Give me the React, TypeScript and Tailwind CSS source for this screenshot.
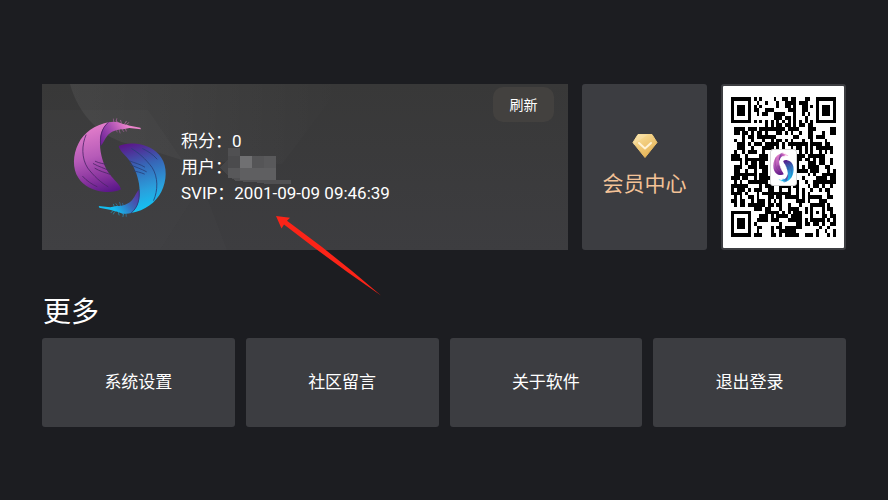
import React from "react";

const moreItems = ["系统设置", "社区留言", "关于软件", "退出登录"];

const SIZE = 37;

function inSquare(x: number, y: number, left: number, top: number, size: number) {
  return x >= left && x < left + size && y >= top && y < top + size;
}

function ring(x: number, y: number, cx: number, cy: number) {
  return Math.max(Math.abs(x - cx), Math.abs(y - cy));
}

// Builds the dark modules: three finders, timing lines, one alignment mark and data.
function buildModules() {
  let seed = 20010909;
  let path = "";
  const last = SIZE - 4;
  for (let y = 0; y < SIZE; y++) {
    for (let x = 0; x < SIZE; x++) {
      seed = (Math.imul(seed, 1103515245) + 12345) & 0x7fffffff;
      let dark = ((seed >> 16) & 255) < 134;
      if (x === 6 || y === 6) dark = (x + y) % 2 === 0;
      if (ring(x, y, 30, 30) <= 2) dark = ring(x, y, 30, 30) !== 1;
      if (
        inSquare(x, y, 0, 0, 8) ||
        inSquare(x, y, SIZE - 8, 0, 8) ||
        inSquare(x, y, 0, SIZE - 8, 8)
      ) {
        const d = ring(x, y, x < 8 ? 3 : last, y < 8 ? 3 : last);
        dark = d < 2 || d === 3;
      }
      if (dark) path += `M${x} ${y}h1v1h-1z`;
    }
  }
  return path;
}

const modules = buildModules();

function Feather({ fill, fold, edge }: { fill: string; fold: string; edge: string }) {
  return (
    <g>
      <path
        d="M127 31C86 39 54 62 37 95C20 128 19 170 37 197C52 222 82 236 112 239C132 241 151 239 165 232C162 218 148 207 137 194C118 171 109 147 104 119C99 88 104 51 127 31Z"
        fill={fill}
      />
      <path
        d="M127 31C143 27 157 29 169 35L192 41L223 47L225 52L190 48L172 52C152 52 134 59 124 71C115 82 112 94 104 101C99 75 106 48 127 31Z"
        fill={fold}
      />
      <path
        d="M146 34Q141 28 142 21M152 35Q149 27 152 20M159 36Q155 30 151 26M165 37Q167 30 164 25M172 39Q180 34 181 28M152 46Q150 54 153 60M160 46Q158 55 162 63M167 46Q168 55 173 59M173 45Q180 50 181 57M179 40Q186 36 188 32"
        fill="none"
        stroke={fold}
        strokeWidth="2"
        strokeOpacity="0.75"
        strokeLinecap="round"
      />
      <path
        d="M60 69C47 98 46 139 65 168C84 193 105 212 126 224M88 148C101 154 112 155 120 157M82 155C98 164 116 169 130 176M87 169C101 178 117 181 132 187M50 193C62 207 78 217 93 224M127 31C106 49 101 74 104 101"
        fill="none"
        stroke={edge}
        strokeWidth="2.5"
        strokeLinecap="round"
      />
    </g>
  );
}

function Logo({ id, className, stretch = false }: { id: string; className: string; stretch?: boolean }) {
  return (
    <svg
      viewBox={stretch ? "20 16 284 300" : "0 0 330 330"}
      preserveAspectRatio={stretch ? "none" : "xMidYMid meet"}
      className={className}
      aria-hidden="true"
    >
      <defs>
        <linearGradient id={`${id}-pink`} x1="0.55" y1="0" x2="0.75" y2="1">
          <stop offset="0" stopColor="#e47fcb" />
          <stop offset="0.45" stopColor="#b65bb8" />
          <stop offset="0.75" stopColor="#8a359f" />
          <stop offset="1" stopColor="#5a1789" />
        </linearGradient>
        <linearGradient id={`${id}-pinkfold`} gradientUnits="userSpaceOnUse" x1="104" y1="95" x2="185" y2="40">
          <stop offset="0" stopColor="#6b1f95" />
          <stop offset="0.5" stopColor="#a34ab0" />
          <stop offset="1" stopColor="#ec84cc" />
        </linearGradient>
        <linearGradient id={`${id}-blue`} x1="0.55" y1="0" x2="0.75" y2="1">
          <stop offset="0" stopColor="#12c5f5" />
          <stop offset="0.3" stopColor="#2a9fdc" />
          <stop offset="0.65" stopColor="#3766b7" />
          <stop offset="1" stopColor="#5a1789" />
        </linearGradient>
        <linearGradient id={`${id}-bluefold`} gradientUnits="userSpaceOnUse" x1="104" y1="95" x2="175" y2="40">
          <stop offset="0" stopColor="#5f2c9c" />
          <stop offset="0.5" stopColor="#3a68b9" />
          <stop offset="1" stopColor="#14bdf0" />
        </linearGradient>
      </defs>
      <Feather fill={`url(#${id}-pink)`} fold={`url(#${id}-pinkfold)`} edge="#4b2568" />
      <g transform="rotate(180 161.5 167)">
        <Feather fill={`url(#${id}-blue)`} fold={`url(#${id}-bluefold)`} edge="#273f78" />
      </g>
    </svg>
  );
}

function CardBackdrop() {
  return (
    <svg viewBox="0 0 526 166" preserveAspectRatio="none" className="absolute inset-0 h-full w-full" aria-hidden="true">
      <defs>
        <linearGradient id="shine" x1="0" y1="0" x2="1" y2="0">
          <stop offset="0" stopColor="#fff" stopOpacity="0.06" />
          <stop offset="1" stopColor="#fff" stopOpacity="0" />
        </linearGradient>
      </defs>
      <path d="M28 0H300L240 80L140 76L92 61C60 56 36 30 28 0Z" fill="url(#shine)" />
      <path d="M0 26H106L140 76L160 100L118 166H0Z" fill="#fff" fillOpacity="0.02" />
      <path d="M118 166L160 100L185 166Z" fill="#fff" fillOpacity="0.01" />
    </svg>
  );
}

function MaskedName() {
  return (
    <svg viewBox="220 148 72 36" className="-mt-[6px] -ml-3 h-9 w-[72px]" shapeRendering="crispEdges" role="img" aria-label="用户">
      <path d="M220 167L228 159V148H240V156H276V180H291V184H264V183L236 181L228 176Z" fill="#505052" />
      <path d="M240 156h12v12h-12z" fill="#707072" />
      <path d="M252 156h12v12h-12z" fill="#555557" />
      <path d="M264 156h12v12h-12z" fill="#59595b" />
      <path d="M228 156h12v12h-12z" fill="#4b4b4d" />
      <path d="M228 168h12v10h-12z" fill="#58585a" />
      <path d="M240 168h36v12h-36z" fill="#5f5f61" />
      <path d="M220 167L228 159V176Z" fill="#464648" />
    </svg>
  );
}

export default function App() {
  return (
    <main className="min-h-screen bg-[#1c1d21] px-[42px] pt-[84px] pb-16 font-[Roboto,'Noto_Sans_CJK_SC',sans-serif] text-white">
      <div className="grid grid-cols-[minmax(0,1fr)_125px_125px] gap-[14px]">
        <section className="relative flex min-h-[166px] items-center bg-gradient-to-b from-[#383838] to-[#3d3d40] pr-[14px] pl-6">
          <CardBackdrop />
          <Logo id="main" className="relative h-[110px] w-[110px] shrink-0" />
          <dl className="relative ml-[5px] text-[17px] leading-[26px]">
            <div className="flex">
              <dt>积分：</dt>
              <dd>0</dd>
            </div>
            <div className="flex h-[26px]">
              <dt>用户：</dt>
              <dd>
                <MaskedName />
              </dd>
            </div>
            <div className="flex whitespace-nowrap">
              <dt>SVIP：</dt>
              <dd>2001-09-09 09:46:39</dd>
            </div>
          </dl>
          <button type="button" className="relative mt-[3px] ml-auto h-[35px] w-[61px] self-start rounded-[10px] bg-[#43413f] text-sm">
            刷新
          </button>
          <svg viewBox="275 215 107 82" className="pointer-events-none absolute top-[131px] left-[233px] h-[82px] w-[107px]" aria-hidden="true">
            <path d="M276 216L290 217.700L287 220.800L322 247L352 271L381 295.500L348 272.500L316 249L284 224.500L281.500 228.500Z" fill="#fb2418" />
          </svg>
        </section>

        <button type="button" className="flex flex-col items-center justify-center rounded-[3px] bg-[#3c3d41] text-[#f3c297]">
          <svg viewBox="0 0 26 24" className="h-6 w-[26px]" aria-hidden="true">
            <defs>
              <linearGradient id="gem" x1="0" y1="0" x2="0.6" y2="1">
                <stop offset="0" stopColor="#fbe3a0" />
                <stop offset="1" stopColor="#e6b356" />
              </linearGradient>
            </defs>
            <path d="M6 0.500H20L25 8.500L13 23.500L1 8.500Z" fill="url(#gem)" stroke="url(#gem)" strokeLinejoin="round" />
            <path d="M6 0.500H16L1 11V8.500Z" fill="#fff" fillOpacity="0.15" />
            <path d="M7 9L13 14.500L19 9" fill="none" stroke="#fff3d6" strokeWidth="2" strokeLinecap="round" strokeLinejoin="round" />
          </svg>
          <span className="mt-[10px] text-[21px] leading-[32px]">会员中心</span>
        </button>

        <figure className="relative flex rounded-[3px] border-2 border-[#3c3d41] bg-white px-2 py-[11px]">
          <svg
            viewBox="0 0 37 37"
            preserveAspectRatio="none"
            className="h-[140px] w-full"
            shapeRendering="crispEdges"
            role="img"
            aria-label="二维码"
          >
            <path d={modules} fill="#000" />
          </svg>
          <div className="absolute inset-0 m-auto h-[37px] w-[27px] rounded-[3px] border border-[#d6d6d6] bg-white p-[2px]">
            <Logo id="small" stretch className="h-full w-full" />
          </div>
        </figure>
      </div>

      <h2 className="mt-[42px] pl-px text-[28px] leading-[42px]">更多</h2>
      <nav className="mt-1 grid grid-cols-4 gap-[11px]">
        {moreItems.map((label) => (
          <button key={label} type="button" className="h-[89px] rounded-[3px] bg-[#3c3d41] text-[17px]">
            {label}
          </button>
        ))}
      </nav>
    </main>
  );
}
